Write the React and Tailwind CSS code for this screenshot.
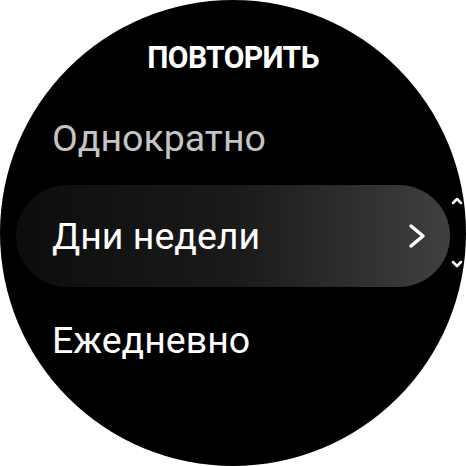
import React from "react";

export default function App() {
  return (
    <div className="w-[466px] h-[466px] bg-white overflow-hidden" style={{ fontFamily: "Roboto, 'Noto Sans', sans-serif" }}>
      <div className="relative w-[466px] h-[466px] rounded-full bg-black flex flex-col">
        <div className="pt-[38px] text-center text-white font-bold text-[30px] leading-[36px] tracking-[-0.6px] scale-y-[1.06]">
          ПОВТОРИТЬ
        </div>
        <div className="mt-[42px] pl-[52px] text-[37.5px] leading-[44px] text-[#c4c4c4]">Однократно</div>
        <div className="mt-[25px] mx-[16px] h-[102px] rounded-full bg-gradient-to-r from-[#0d0d0d] via-[#1a1a1a] to-[#404040] flex items-center justify-between pl-[36px] pr-[24px]">
          <span className="text-[37.5px] leading-[44px] text-white">Дни недели</span>
          <svg width="18" height="26" viewBox="0 0 18 26" fill="none">
            <path d="M3 3 L15 13 L3 23" stroke="white" strokeWidth="3.5" strokeLinecap="round" strokeLinejoin="round" />
          </svg>
        </div>
        <div className="mt-[31px] pl-[52px] text-[37.5px] leading-[44px] text-white">Ежедневно</div>
        <svg className="absolute left-[451px] top-[196px]" width="12" height="9" viewBox="0 0 12 9" fill="none">
          <path d="M2 7 L6 3 L10 7" stroke="white" strokeWidth="2.5" strokeLinecap="round" strokeLinejoin="round" />
        </svg>
        <svg className="absolute left-[451px] top-[260px]" width="12" height="9" viewBox="0 0 12 9" fill="none">
          <path d="M2 2 L6 6 L10 2" stroke="white" strokeWidth="2.5" strokeLinecap="round" strokeLinejoin="round" />
        </svg>
      </div>
    </div>
  );
}
